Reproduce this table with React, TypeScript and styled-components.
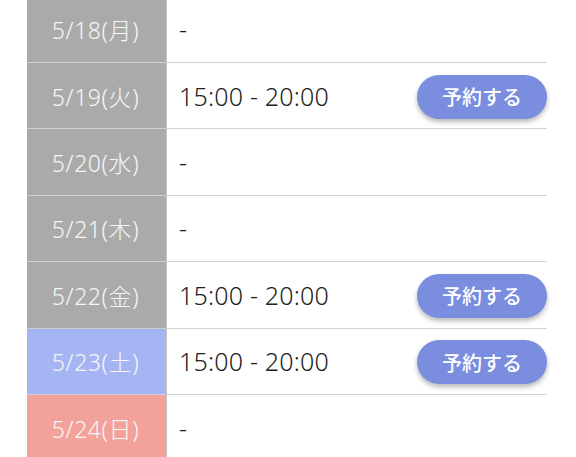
import React from "react";
import styled, { createGlobalStyle } from "styled-components";

const Global = createGlobalStyle`
  html, body { margin: 0; padding: 0; background: #ffffff; }
  body { font-family: "Noto Sans", "Noto Sans CJK JP", sans-serif; overflow: hidden; }
`;

const Page = styled.div`
  width: 576px;
  height: 457px;
  overflow: hidden;
  padding: 0 29px 0 27px;
  box-sizing: border-box;
`;

const Table = styled.div`
  display: flex;
  flex-direction: column;
  margin-top: -3.4px;
`;

type Kind = "weekday" | "sat" | "sun";

const Row = styled.div`
  display: grid;
  grid-template-columns: 140px 1fr;
  height: 66.4px;
`;

const bg: Record<Kind, string> = {
  weekday: "#aaaaaa",
  sat: "#a5b4f2",
  sun: "#f3a29b",
};

const DateCell = styled.div<{ $kind: Kind }>`
  background: ${(p) => bg[p.$kind]};
  color: #f6f6f6;
  font-size: 23px;
  font-weight: 300;
  letter-spacing: 0.6px;
  display: flex;
  align-items: center;
  justify-content: center;
  padding-right: 2px;
  border-bottom: 1px solid #cfcfcf;
  border-right: 1px solid #c4c4c4;
  box-sizing: border-box;
`;

const InfoCell = styled.div`
  display: flex;
  align-items: center;
  justify-content: space-between;
  padding-left: 12px;
  border-bottom: 1px solid #d2d2d2;
  box-sizing: border-box;
  color: #222222;
  font-size: 25px;
  font-weight: 300;
`;

const Time = styled.span`
  letter-spacing: 0.2px;
`;

const ReserveButton = styled.button`
  width: 130px;
  height: 44px;
  border: none;
  border-radius: 22px;
  background: #7a8ddf;
  color: #ffffff;
  font-family: "Noto Sans CJK JP", sans-serif;
  font-size: 20px;
  font-weight: 500;
  box-shadow: 0 3px 5px rgba(0, 0, 0, 0.28);
  margin-top: 2px;
  padding: 0;
  cursor: pointer;
`;

const days: { date: string; kind: Kind; time?: string }[] = [
  { date: "5/18(月)", kind: "weekday" },
  { date: "5/19(火)", kind: "weekday", time: "15:00 - 20:00" },
  { date: "5/20(水)", kind: "weekday" },
  { date: "5/21(木)", kind: "weekday" },
  { date: "5/22(金)", kind: "weekday", time: "15:00 - 20:00" },
  { date: "5/23(土)", kind: "sat", time: "15:00 - 20:00" },
  { date: "5/24(日)", kind: "sun" },
];

export default function App() {
  return (
    <>
      <Global />
      <Page>
        <Table>
          {days.map((d) => (
            <Row key={d.date}>
              <DateCell $kind={d.kind}>{d.date}</DateCell>
              <InfoCell>
                <Time>{d.time ?? "-"}</Time>
                {d.time && <ReserveButton>予約する</ReserveButton>}
              </InfoCell>
            </Row>
          ))}
        </Table>
      </Page>
    </>
  );
}
